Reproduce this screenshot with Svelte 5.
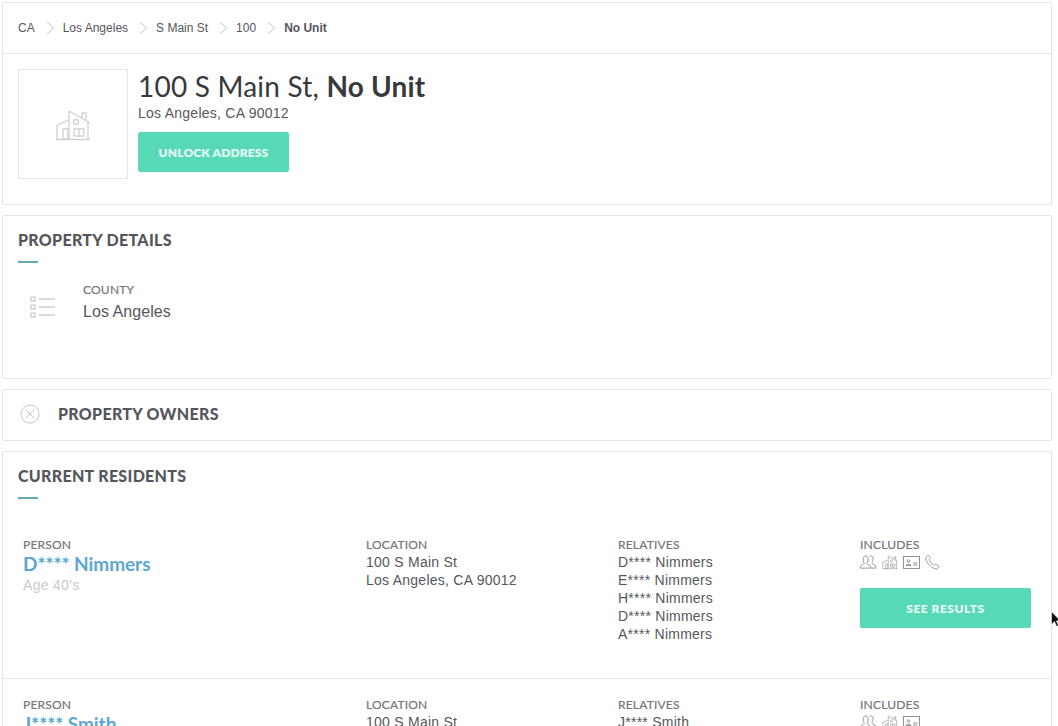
<script>
  const crumbs = ['CA', 'Los Angeles', 'S Main St', '100'];
  const people = [
    { name: 'D**** Nimmers', age: "Age 40's", phone: true, relatives: ['D**** Nimmers', 'E**** Nimmers', 'H**** Nimmers', 'D**** Nimmers', 'A**** Nimmers'] },
    { name: 'J**** Smith', age: "Age 50's", phone: false, relatives: ['J**** Smith', 'M**** Smith'] }
  ];
</script>

{#snippet houseShape()}
  <path d="M1 16 13 10M14 1 35 13M14 1v28M27 8V3h4v7M2 15v14M33 12v17M1 29.500h34"/>
  <path d="M8 19h5v10H8zM19 19h10v7H19zM24 19v7"/>
  <circle cx="21" cy="12" r="2.500"/>
{/snippet}

{#snippet peopleIcon()}
  <svg class="inc people" width="17" height="14" viewBox="0 0 18 14" fill="none" stroke="#85878c" stroke-width=".9">
    <path d="M.5 13.500v-1.600c0-1.300 3.400-2 3.900-3.200.2-.6-.2-1-.6-1.700-.5-.9-.8-3-.2-4.400C4.100 1.300 5 .6 6 .6s2 .7 2.400 2c.5 1.400.2 3.500-.3 4.400-.4.700-.8 1.100-.6 1.700.5 1.200 3.900 1.900 3.900 3.200v1.600z"/>
    <path d="M10.500 .9c.9-.5 2.200-.3 2.900.7.700 1.100.6 3.800-.1 5-.4.700-.8 1.200-.6 1.900.4 1 4 1.700 4 3.100v1.900h-4.800"/>
  </svg>
{/snippet}

{#snippet houseSmall()}
  <svg class="inc house" width="16" height="15" viewBox="0 0 36 31" fill="none" stroke="#9a9ca1" stroke-width="1.500">
    {@render houseShape()}
  </svg>
{/snippet}

{#snippet cardIcon()}
  <svg class="inc idcard" width="17" height="13" viewBox="0 0 17 13" fill="none" stroke="#85878c" stroke-width=".9">
    <rect x=".5" y=".5" width="16" height="12"/>
    <circle cx="5.500" cy="5" r="1.300"/>
    <path d="M3 9.500c0-1.800 5-1.800 5 0zM10 7h4.500M10 9h4.500"/>
  </svg>
{/snippet}

{#snippet phoneIcon()}
  <svg class="inc" width="15" height="16" viewBox="0 0 15 15" fill="none" stroke="#85878c" stroke-width=".8">
    <path d="M1 2.800 2.800.8c.3-.3.700-.2.900.1l1.500 2.400c.2.300.1.600-.1.800l-1 1c.5 1.800 3.400 5 5.200 5.800l1.100-1c.2-.2.500-.2.800 0l2.600 1.700c.3.200.3.600.1.800l-1.800 2c-.3.300-.8.300-1.300.1C6 13.100 1.700 8.500.7 4.200c-.1-.5 0-1 .3-1.400z"/>
  </svg>
{/snippet}

<div class="page">
  <section class="card">
    <nav class="crumbs">
      {#each crumbs as c}
        <span>{c}</span>
        <svg class="chev" width="9" height="14" viewBox="0 0 9 14" fill="none" stroke="#c4c5c8" stroke-width="1"><path d="M1 1l6.500 6L1 13"/></svg>
      {/each}
      <b>No Unit</b>
    </nav>
    <div class="hero">
      <div class="thumb">
        <svg class="bighouse" width="36" height="31" viewBox="0 0 36 31" fill="none" stroke="#d0d1d4" stroke-width="1.300">
          {@render houseShape()}
        </svg>
      </div>
      <div class="info">
        <h1>100 S Main St, <b>No Unit</b></h1>
        <p>Los Angeles, CA 90012</p>
        <button class="cta unlock">UNLOCK ADDRESS</button>
      </div>
    </div>
  </section>

  <section class="card details">
    <h2>PROPERTY DETAILS</h2>
    <div class="rule"></div>
    <div class="county">
      <svg width="26" height="22" viewBox="0 0 26 22" fill="none" stroke="#cfd0d3" stroke-width="1.300">
        <rect x="1" y="1" width="4" height="4"/><rect x="1" y="9" width="4" height="4"/><rect x="1" y="17" width="4" height="4"/>
        <path d="M9 3h16M9 11h16M9 19h16"/>
      </svg>
      <div>
        <div class="label">COUNTY</div>
        <div class="county-val">Los Angeles</div>
      </div>
    </div>
  </section>

  <section class="card owners">
    <svg width="20" height="20" viewBox="0 0 20 20" fill="none" stroke="#c6c7ca" stroke-width="1"><circle cx="10" cy="10" r="9"/><path d="M6 6l8 8M14 6l-8 8"/></svg>
    <h2>PROPERTY OWNERS</h2>
  </section>

  <section class="card residents">
    <h2>CURRENT RESIDENTS</h2>
    <div class="rule"></div>
    {#each people as p}
      <div class="row">
        <div class="c1">
          <div class="label">PERSON</div>
          <a class="name" href="#top">{p.name}</a>
          <div class="age">{p.age}</div>
        </div>
        <div class="c2">
          <div class="label">LOCATION</div>
          <div class="line">100 S Main St</div>
          <div class="line">Los Angeles, CA 90012</div>
        </div>
        <div class="c3">
          <div class="label">RELATIVES</div>
          {#each p.relatives as r}<div class="line">{r}</div>{/each}
        </div>
        <div class="c4">
          <div class="label">INCLUDES</div>
          <div class="icons">
            {@render peopleIcon()}{@render houseSmall()}{@render cardIcon()}{#if p.phone}{@render phoneIcon()}{/if}
          </div>
          <button class="cta see">SEE RESULTS</button>
        </div>
      </div>
    {/each}
  </section>
</div>

<svg class="cursor" width="10" height="17" viewBox="0 0 10 17"><path d="M.5.500v13l3-3 2 5 2-1-2-4.500h4z" fill="#111" stroke="#fff" stroke-width=".6"/></svg>

<style>
  :global(body) { margin: 0; background: #fff; height: 726px; overflow: hidden; }
  .page { position: relative; display: flex; flex-direction: column; gap: 10px; padding: 2px 6px 0 2px; height: 724px; overflow: hidden; font-family: "Liberation Sans", Arial, sans-serif; color: #54565c; }
  .card { border: 1px solid #e3e4e6; border-radius: 2px; background: #fff; box-sizing: border-box; flex: none; }
  .crumbs { height: 51px; box-sizing: border-box; border-bottom: 1px solid #e3e4e6; display: flex; align-items: center; padding-left: 15px; font-size: 12px; color: #55575c; }
  .crumbs .chev { margin: 0 8px 0 11px; }
  .crumbs b { color: #54565c; }
  .hero { display: flex; gap: 10px; padding: 15px 15px 25px; }
  .thumb { width: 110px; height: 110px; box-sizing: border-box; border: 1px solid #e3e4e6; display: flex; align-items: center; justify-content: center; }
  .bighouse { margin-top: 2px; }
  h1 { margin: 0; font: 400 28px/34px Lato, sans-serif; letter-spacing: .2px; color: #38393d; }
  h1 b { font-weight: 700; }
  .info p { margin: 1px 0 10px; font-size: 14px; line-height: 18px; letter-spacing: .25px; color: #55575c; }
  .cta { display: block; border: 0; border-radius: 2px; background: #57d9b7; color: #e6faf5; font: 800 12px/38px Lato, sans-serif; letter-spacing: .5px; padding: 2px 0 0; height: 40px; box-sizing: border-box; }
  .unlock { width: 151px; letter-spacing: .15px; }
  h2 { margin: 0; font: 900 16px/20px Lato, sans-serif; letter-spacing: .3px; color: #54565c; }
  .rule { width: 20px; height: 2px; background: #62a9b5; margin-top: 11px; }
  .details { height: 164px; padding: 14px 15px 0; }
  .county { display: flex; gap: 27px; align-items: flex-start; margin-top: 20px; padding-left: 12px; }
  .county svg { margin-top: 13px; }
  .label { font: 400 12px/14px Lato, sans-serif; letter-spacing: .2px; color: #74767b; -webkit-text-stroke: .2px #74767b; }
  .county-val { font-size: 16px; line-height: 18px; margin-top: 6px; letter-spacing: .05px; color: #55575c; }
  .owners { height: 52px; display: flex; align-items: center; gap: 17px; padding-left: 17px; }
  .owners svg { margin-top: -3px; }
  .owners h2 { margin-top: -2px; margin-left: 1px; }
  .residents { padding: 14px 0 0; flex: 1 0 auto; }
  .residents h2, .residents .rule { margin-left: 15px; }
  .row { display: grid; grid-template-columns: 343px 252px 242px 172px; height: 160px; box-sizing: border-box; padding: 19px 0 0 20px; border-bottom: 1px solid #e3e4e6; }
  .rule + .row { height: 180px; padding-top: 39px; }
  .name { display: block; font: 700 19px/20px Lato, sans-serif; letter-spacing: -.05px; color: #5ba7d1; text-decoration: none; margin-top: 2px; }
  .age { font-size: 14px; line-height: 18px; margin-top: 2px; color: #c9cacc; letter-spacing: .3px; }
  .line { font-size: 14px; line-height: 18px; letter-spacing: .25px; color: #55575c; }
  .c2 .label, .c3 .label { margin-bottom: 1px; }
  .icons { display: flex; align-items: center; gap: 5px; height: 16px; margin-top: 2px; }
  .see { width: 171px; margin-top: 18px; }
  .cursor { position: absolute; left: 1051px; top: 611px; }
</style>
